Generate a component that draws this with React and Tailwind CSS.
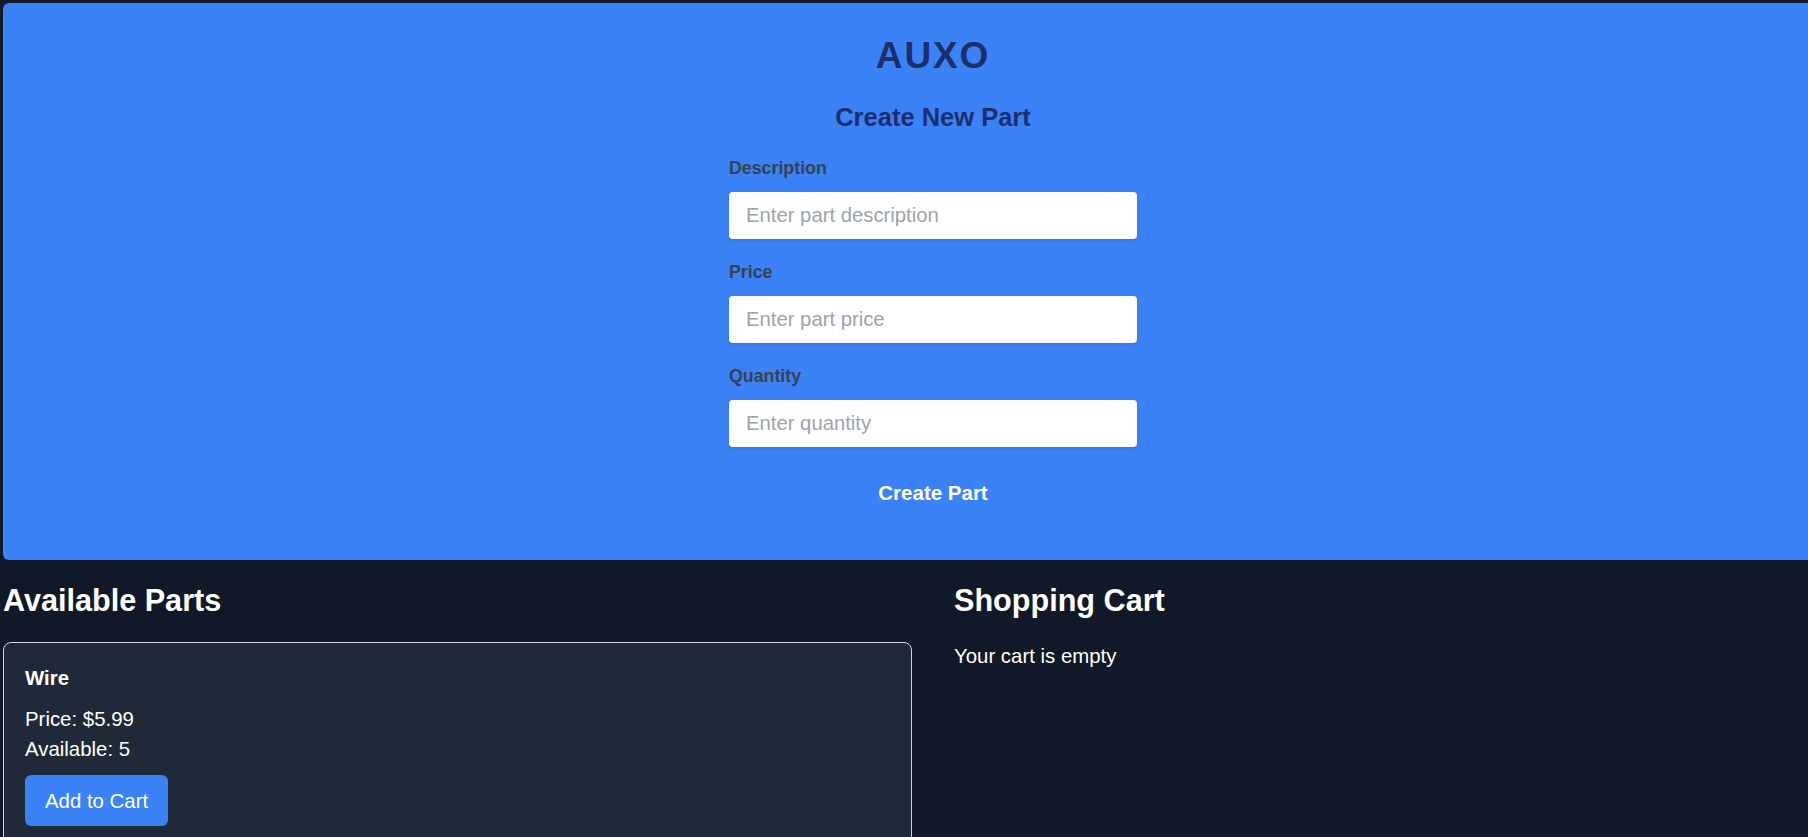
export default function App() {
  const fields = [
    { label: "Description", placeholder: "Enter part description", type: "text" },
    { label: "Price", placeholder: "Enter part price", type: "text" },
    { label: "Quantity", placeholder: "Enter quantity", type: "text" },
  ];
  return (
    <div className="h-[837px] w-full overflow-hidden bg-[#111827] font-['Liberation_Sans',Arial,sans-serif]">
      <div className="w-[1866px] p-[3px]">
        <section className="rounded-[6px] bg-[#3b82f6] pt-[33px] pb-[42px]">
          <h1 className="mb-[25px] text-center text-[37px] leading-[40px] font-bold tracking-wider text-[#1c2e6c]">
            AUXO
          </h1>
          <h2 className="mb-[23px] text-center text-[25.5px] leading-[32px] font-bold text-[#1c2e6c]">
            Create New Part
          </h2>
          <form className="mx-auto w-[408px]" onSubmit={(e) => e.preventDefault()}>
            {fields.map((f) => (
              <div key={f.label} className="mb-[21px]">
                <label className="mb-[12px] block text-[17.8px] leading-[24px] font-bold text-[#374151]">
                  {f.label}
                </label>
                <input
                  type={f.type}
                  placeholder={f.placeholder}
                  className="block h-[47px] w-full rounded-[4px] border-0 bg-white px-[17px] text-[20.3px] text-[#111827] shadow-sm outline-none placeholder:text-[#9ca3af]"
                />
              </div>
            ))}
            <button
              type="submit"
              className="block w-full py-[11px] text-center text-[20.5px] leading-[28px] font-bold text-white"
            >
              Create Part
            </button>
          </form>
        </section>

        <div className="mt-[22px] grid grid-cols-2 gap-[42px]">
          <div>
            <h2 className="mb-[24px] text-[30.6px] leading-[36px] font-bold text-white">Available Parts</h2>
            <div className="rounded-[8px] border border-[#d1d5db] bg-[#1f2937] px-[21px] pt-[21px] pb-[20px]">
              <h3 className="mb-[12px] text-[20.4px] leading-[28px] font-bold text-white">Wire</h3>
              <p className="text-[20.4px] leading-[30px] text-white">Price: $5.99</p>
              <p className="text-[20.4px] leading-[30px] text-white">Available: 5</p>
              <button className="mt-[11px] flex h-[51px] items-center rounded-[6px] bg-[#3b82f6] px-[20px] text-[20.4px] leading-[30px] text-white">
                Add to Cart
              </button>
            </div>
          </div>
          <div>
            <h2 className="mb-[24px] text-[30.6px] leading-[36px] font-bold text-white">Shopping Cart</h2>
            <p className="text-[20.4px] leading-[28px] text-white">Your cart is empty</p>
          </div>
        </div>
      </div>
    </div>
  );
}
